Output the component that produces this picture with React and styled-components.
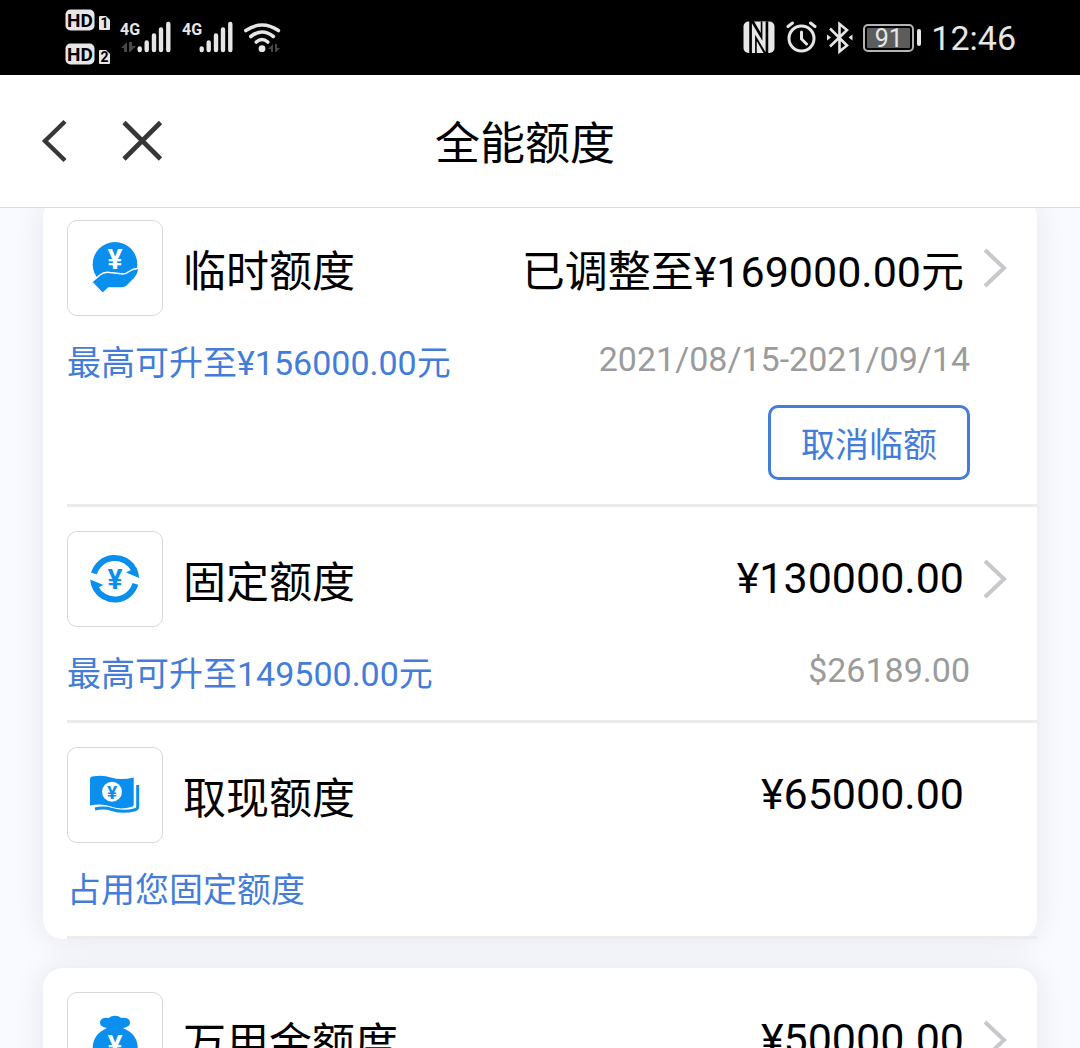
import React from 'react';
import styled, { createGlobalStyle } from 'styled-components';

const GlobalStyle = createGlobalStyle`
  * {
    box-sizing: border-box;
  }

  body {
    margin: 0;
    background: #f9faff;
    font-family: Roboto, 'Noto Sans CJK SC', sans-serif;
    color: #000;
  }
`;

const Screen = styled.div`
  display: flex;
  flex-direction: column;
  height: 100vh;
  overflow: hidden;
`;

const StatusBar = styled.div`
  display: flex;
  flex: none;
  align-items: center;
  justify-content: space-between;
  height: 75px;
  padding: 0 64px;
  background: #000;
  color: #e6e6e6;
`;

const StatusGroup = styled.div`
  display: flex;
  align-items: center;
  gap: 10px;
`;

const Battery = styled.div`
  display: flex;
  align-items: center;
  gap: 3px;

  &::after {
    content: '';
    width: 4px;
    height: 17px;
    border-radius: 2px;
    background: #e6e6e6;
  }
`;

const BatteryLevel = styled.div`
  width: 51px;
  height: 28px;
  padding: 2px;
  border: 2px solid #b4b4b4;
  border-radius: 5px;
  font-size: 25px;
  line-height: 22px;
  text-align: center;
  background: #5c5c5c content-box;
`;

const Clock = styled.time`
  font-size: 34px;
  line-height: 40px;
`;

const Header = styled.header`
  display: grid;
  grid-template-columns: 1fr auto 1fr;
  flex: none;
  align-items: center;
  height: 133px;
  padding: 0 70px 0 40px;
  border-bottom: 1px solid #dcdcdc;
  background: #fff;
`;

const HeaderNav = styled.nav`
  display: flex;
  gap: 52px;
`;

const IconButton = styled.button`
  display: flex;
  padding: 0;
  border: 0;
  background: none;
  cursor: pointer;
`;

const Title = styled.h1`
  margin: 0;
  padding-top: 8px;
  font-size: 45px;
  font-weight: 400;
  line-height: 60px;
`;

/* The list is scrolled a little way under the header */
const Content = styled.main`
  display: flex;
  flex: 1;
  flex-direction: column;
  gap: 29px;
  min-height: 0;
  overflow: hidden;
  padding: 0 43px;

  & > :first-child {
    margin-top: -12px;
  }
`;

const Card = styled.section`
  flex: none;
  padding-left: 24px;
  border-radius: 20px;
  background: #fff;
  box-shadow: 0 0 30px rgba(30, 30, 50, 0.09);
`;

const Row = styled.div`
  padding: 24px 67px 24px 0;
  border-bottom: 3px solid #ececec;
`;

const RowHead = styled.div`
  display: flex;
  align-items: center;
`;

const IconTile = styled.div`
  display: flex;
  align-items: center;
  justify-content: center;
  width: 96px;
  height: 96px;
  border: 1px solid #d8d8d8;
  border-radius: 10px;
`;

const Name = styled.h2`
  flex: 1;
  margin: 0 0 0 20px;
  padding-top: 8px;
  font-size: 43px;
  font-weight: 400;
  line-height: 60px;
`;

const Amount = styled.div`
  margin-right: 6px;
  padding: ${({ $mixed }) => ($mixed ? '8px 0 0' : '0 0 2px')};
  font-size: 43px;
  line-height: 60px;
`;

const Chevron = styled.button`
  display: flex;
  justify-content: center;
  width: 50px;
  margin-right: -50px;
  padding: 0;
  border: 0;
  background: none;
  cursor: pointer;
`;

const RowDetail = styled.div`
  display: flex;
  align-items: flex-start;
  justify-content: space-between;
  margin-top: 20px;
  font-size: 34px;
`;

const Hint = styled.span`
  padding-top: 6px;
  color: #437dd9;
  line-height: 43px;
`;

const Extra = styled.span`
  color: #9b9b9b;
  line-height: 47px;
`;

const Actions = styled.div`
  display: flex;
  justify-content: flex-end;
  margin-top: 20px;
`;

const OutlineButton = styled.button`
  height: 75px;
  padding: 4px 30px 0;
  border: 3px solid #437dd9;
  border-radius: 10px;
  background: #fff;
  color: #437dd9;
  font: inherit;
  font-size: 34px;
  line-height: 50px;
  cursor: pointer;
`;

const Yen = styled.text`
  font-family: Roboto, sans-serif;
  font-size: ${({ $size }) => $size || 28}px;
  font-weight: 700;
  text-anchor: middle;
`;

const BadgeText = styled.text`
  font-family: Roboto, sans-serif;
  font-size: ${({ $size }) => $size}px;
  font-weight: 700;
  text-anchor: middle;
`;

const NetworkText = styled.text`
  font-family: Roboto, sans-serif;
  font-size: 16px;
  font-weight: 700;
`;

const BLUE = '#0a8fee';

const HdBadges = () => (
  <svg width="46" height="58" viewBox="0 0 46 58">
    {[1, 2].map((sim, i) => (
      <g key={sim} transform={`translate(1 ${i * 34})`}>
        <rect x="0.5" y="0.5" width="29" height="21" rx="5" fill="#e6e6e6" />
        <BadgeText x="15" y="17.5" $size={19} fill="#000">
          HD
        </BadgeText>
        <path d="M34 8q0-1 1-1h6l4 4v9q0 1-1 1h-9q-1 0-1-1z" fill="#e6e6e6" />
        <BadgeText x="39.5" y="19" $size={14} fill="#000">
          {sim}
        </BadgeText>
      </g>
    ))}
  </svg>
);

const Signal = ({ active }) => (
  <svg width="52" height="36" viewBox="0 0 52 36">
    <NetworkText x="0" y="15" fill="#e6e6e6">
      4G
    </NetworkText>
    {active && (
      <path d="M7 22v10H4v-4H1zM9 22h3v4h4l-6 6H9z" fill="#484848" />
    )}
    <path
      d="M19.7 28.5v1.5M26.7 22.5v7.5M34 15.5v14.5M41 9.5v20.5M48.3 4v26"
      stroke="#e6e6e6"
      strokeWidth="4.4"
      strokeLinecap="round"
    />
  </svg>
);

const Wifi = () => (
  <svg width="38" height="36" viewBox="0 0 38 36" fill="none">
    <path
      d="M1.8 10.5Q18 -0.5 34.4 10.5M6.800 16.5Q18 7.5 29.400 16.5M12.300 22Q18 17 23.800 22"
      stroke="#e6e6e6"
      strokeWidth="3.6"
      strokeLinecap="round"
    />
    <circle cx="18" cy="28.7" r="3.4" fill="#e6e6e6" />
    <path d="M29 24v8h-2v-3h-3zM31 24h2v4h3l-4 4h-1z" fill="#484848" />
  </svg>
);

const Nfc = () => (
  <svg width="32" height="36" viewBox="0 0 32 36" fill="none">
    <rect x="0.5" y="1.5" width="31" height="31.5" rx="5" fill="#e6e6e6" />
    <path
      d="M10 33V7L21.500 27V1.500"
      stroke="#000"
      strokeWidth="7.500"
    />
    <path
      d="M10.500 33V9L21 26.500V1.500"
      stroke="#e6e6e6"
      strokeWidth="3.200"
    />
  </svg>
);

const Alarm = () => (
  <svg width="32" height="36" viewBox="0 0 32 36" fill="none">
    <circle cx="16.5" cy="18.5" r="12.5" stroke="#e6e6e6" strokeWidth="3" />
    <path
      d="M16.5 12v7l5 5M3 6.5L7.5 3M30 6.5L25.5 3"
      stroke="#e6e6e6"
      strokeWidth="3"
      strokeLinecap="round"
    />
  </svg>
);

const Bluetooth = () => (
  <svg width="26" height="36" viewBox="0 0 26 36" fill="none">
    <path
      d="M3 8.5L20 25.5L12.5 31.5V4L20 10L3 26.5"
      stroke="#e6e6e6"
      strokeWidth="2.6"
    />
    <path d="M0 14.5l4 3-4 3zM25.5 14.5l-4 3 4 3z" fill="#e6e6e6" />
  </svg>
);

const BackIcon = () => (
  <svg width="28" height="44" viewBox="0 0 28 44" fill="none">
    <path d="M25 2.5L5 22L25 41.5" stroke="#373737" strokeWidth="4.4" />
  </svg>
);

const CloseIcon = () => (
  <svg width="44" height="44" viewBox="0 0 44 44" fill="none">
    <path d="M4 3.500L40.5 40M40.5 3.500L4 40" stroke="#373737" strokeWidth="4.6" />
  </svg>
);

const ChevronIcon = () => (
  <svg width="26" height="42" viewBox="0 0 26 42" fill="none">
    <path d="M3 3L22 21L3 39" stroke="#c8c8cc" strokeWidth="4" />
  </svg>
);

const HandIcon = () => (
  <svg width="64" height="64" viewBox="0 0 64 64">
    <circle cx="32" cy="28.3" r="22.3" fill={BLUE} />
    <Yen x="32" y="33" fill="#fff">
      ¥
    </Yen>
    <path
      d="M8.700 46L17 39Q21 35.5 27 36.5L40 38Q43 38 46 35.5Q51 32 56 32.5Q55.500 38 51 43L44 50Q42 52 39 52H25.500L19.7 57.5z"
      fill={BLUE}
      stroke="#fff"
      strokeWidth="1.5"
    />
  </svg>
);

const CycleIcon = () => (
  <svg width="64" height="64" viewBox="0 0 64 64">
    {[0, 180].map(angle => (
      <g key={angle} transform={`rotate(${angle} 31.7 31.7)`}>
        <path
          d="M11 26.5A21.5 21.5 0 0 1 51 23"
          fill="none"
          stroke={BLUE}
          strokeWidth="6"
        />
        <path d="M43 25.5L48 23L53 20Q56 25 56.2 31z" fill={BLUE} />
      </g>
    ))}
    <Yen x="32" y="42" fill={BLUE}>
      ¥
    </Yen>
  </svg>
);

const CashIcon = () => (
  <svg width="64" height="64" viewBox="0 0 64 64">
    <path
      d="M7 16Q7 14 9 13.5Q20 11.5 28 14.5Q38 17.5 50.7 14.5V42Q50.7 43.5 48 44Q38 47 28 43.5Q18 40 7 42.5z"
      fill={BLUE}
    />
    <circle cx="29" cy="28.7" r="10" fill="#fff" />
    <Yen x="29" y="35.5" $size={19} fill={BLUE}>
      ¥
    </Yen>
    <path
      d="M54.7 22V44Q54.7 46 52 46.7Q40 50 29 46.5Q21 44 12 46"
      fill="none"
      stroke={BLUE}
      strokeWidth="3"
    />
  </svg>
);

const BagIcon = () => (
  <svg width="64" height="64" viewBox="0 0 64 64">
    <path
      d="M24 20Q16.5 19 17 14Q18 9 26 10Q28 7.7 32 7.7Q36 7.7 38 10Q46 9 47 14Q47.5 19 40 20Q54.5 26 54.7 40Q54.5 57 44 57H20Q9.7 57 9.7 40Q10 26 24 20z"
      fill={BLUE}
    />
    <Yen x="32" y="47" fill="#fff">
      ¥
    </Yen>
  </svg>
);

const cards = [
  [
    {
      name: '临时额度',
      Icon: HandIcon,
      amount: '已调整至¥169000.00元',
      mixed: true,
      link: true,
      hint: '最高可升至¥156000.00元',
      extra: '2021/08/15-2021/09/14',
      action: '取消临额',
    },
    {
      name: '固定额度',
      Icon: CycleIcon,
      amount: '¥130000.00',
      link: true,
      hint: '最高可升至149500.00元',
      extra: '$26189.00',
    },
    {
      name: '取现额度',
      Icon: CashIcon,
      amount: '¥65000.00',
      hint: '占用您固定额度',
    },
  ],
  [
    {
      name: '万用金额度',
      Icon: BagIcon,
      amount: '¥50000.00',
      link: true,
    },
  ],
];

const LimitRow = ({ name, Icon, amount, mixed, link, hint, extra, action }) => (
  <Row>
    <RowHead>
      <IconTile>
        <Icon />
      </IconTile>
      <Name>{name}</Name>
      <Amount $mixed={mixed}>{amount}</Amount>
      {link && (
        <Chevron aria-label={name}>
          <ChevronIcon />
        </Chevron>
      )}
    </RowHead>
    {hint && (
      <RowDetail>
        <Hint>{hint}</Hint>
        {extra && <Extra>{extra}</Extra>}
      </RowDetail>
    )}
    {action && (
      <Actions>
        <OutlineButton>{action}</OutlineButton>
      </Actions>
    )}
  </Row>
);

const App = () => (
  <Screen>
    <GlobalStyle />
    <StatusBar>
      <StatusGroup>
        <HdBadges />
        <Signal active />
        <Signal />
        <Wifi />
      </StatusGroup>
      <StatusGroup>
        <Nfc />
        <Alarm />
        <Bluetooth />
        <Battery>
          <BatteryLevel>91</BatteryLevel>
        </Battery>
        <Clock>12:46</Clock>
      </StatusGroup>
    </StatusBar>
    <Header>
      <HeaderNav>
        <IconButton aria-label="返回">
          <BackIcon />
        </IconButton>
        <IconButton aria-label="关闭">
          <CloseIcon />
        </IconButton>
      </HeaderNav>
      <Title>全能额度</Title>
    </Header>
    <Content>
      {cards.map(rows => (
        <Card key={rows[0].name}>
          {rows.map(row => (
            <LimitRow key={row.name} {...row} />
          ))}
        </Card>
      ))}
    </Content>
  </Screen>
);

export default App;
